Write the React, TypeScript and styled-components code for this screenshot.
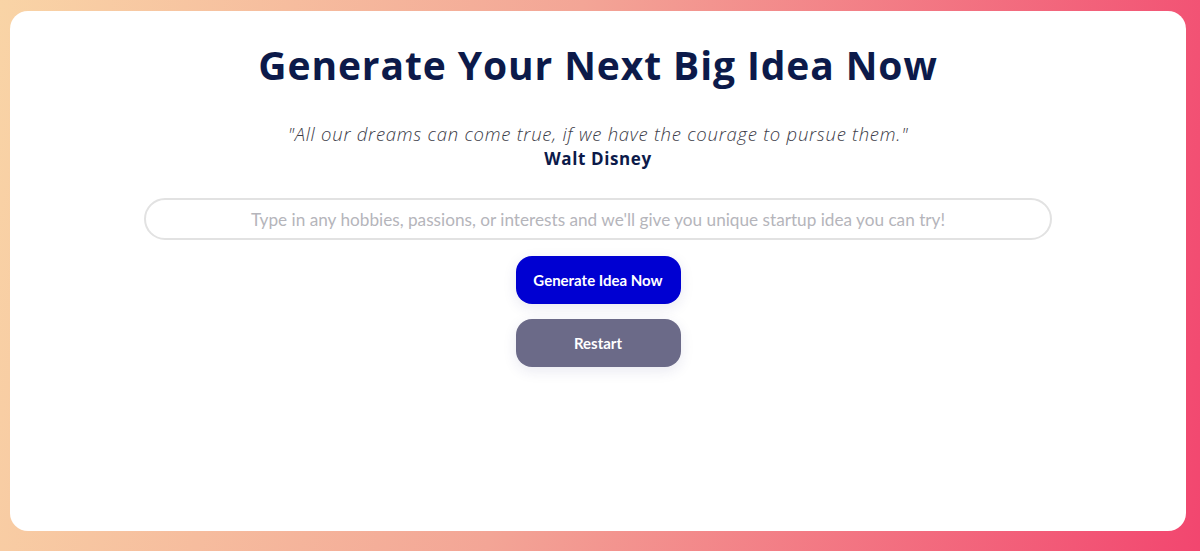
import React from 'react'
import styled, { createGlobalStyle } from 'styled-components'

const GlobalStyle = createGlobalStyle`
  html, body {
    margin: 0;
    padding: 0;
    height: 100%;
  }
  body {
    font-family: "Lato", "Open Sans", sans-serif;
  }
  #root {
    height: 100%;
  }
`

const Page = styled.div`
  box-sizing: border-box;
  width: 100%;
  height: 551px;
  padding: 11px 14px 20px 10px;
  background: linear-gradient(100deg, #f9d4a6 0%, #f3a596 45%, #f2466f 100%);
`

const Card = styled.main`
  box-sizing: border-box;
  height: 100%;
  background: #ffffff;
  border-radius: 18px;
  display: flex;
  flex-direction: column;
  align-items: center;
  padding-top: 29px;
`

const Title = styled.h1`
  margin: 0;
  font-family: "Open Sans", sans-serif;
  font-weight: 700;
  font-size: 39px;
  letter-spacing: 0.9px;
  line-height: 50px;
  color: #0c1a4a;
`

const Quote = styled.p`
  margin: 33px 0 0;
  font-family: "Open Sans", sans-serif;
  font-style: italic;
  font-weight: 300;
  font-size: 18.5px;
  letter-spacing: 0.75px;
  line-height: 22px;
  color: #3c3c48;
`

const Author = styled.p`
  margin: 3px 0 0;
  font-family: "Open Sans", sans-serif;
  font-weight: 700;
  font-size: 17px;
  letter-spacing: 0.6px;
  line-height: 22px;
  color: #0c1a4a;
`

const Input = styled.input`
  box-sizing: border-box;
  margin-top: 28px;
  width: 908px;
  height: 42px;
  border: 2px solid #e2e2e2;
  border-radius: 21px;
  text-align: center;
  font-family: "Lato", sans-serif;
  font-size: 17.2px;
  color: #333;
  outline: none;
  background: #fff;

  &::placeholder {
    color: #b5b5bb;
  }
`

const Button = styled.button<{ $tone: 'primary' | 'muted' }>`
  width: 165px;
  height: 48px;
  border: none;
  border-radius: 16px;
  font-family: "Lato", sans-serif;
  font-weight: 700;
  font-size: 15px;
  color: #ffffff;
  cursor: pointer;
  background: ${({ $tone }) => ($tone === 'primary' ? '#0000d2' : '#6b6a88')};
  box-shadow: 0 4px 14px rgba(40, 40, 120, 0.1);
  margin-top: ${({ $tone }) => ($tone === 'primary' ? '16px' : '15px')};
`

const App = () => {
  return (
    <>
      <GlobalStyle />
      <Page>
        <Card>
          <Title>Generate Your Next Big Idea Now</Title>
          <Quote>"All our dreams can come true, if we have the courage to pursue them."</Quote>
          <Author>Walt Disney</Author>
          <Input placeholder="Type in any hobbies, passions, or interests and we'll give you unique startup idea you can try!" />
          <Button $tone="primary">Generate Idea Now</Button>
          <Button $tone="muted">Restart</Button>
        </Card>
      </Page>
    </>
  )
}

export default App
